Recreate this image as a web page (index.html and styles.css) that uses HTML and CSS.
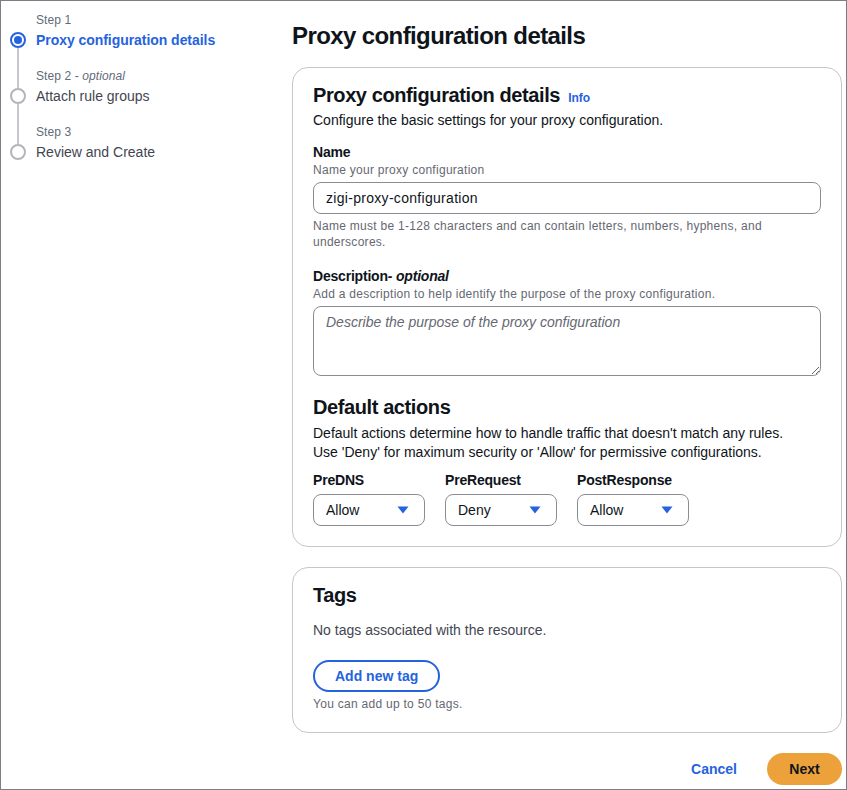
FILE: index.html
```html
<!DOCTYPE html>
<html lang="en">
<head>
<meta charset="utf-8">
<title>Proxy configuration details</title>
<link rel="stylesheet" href="styles.css">
</head>
<body>
<div class="frame">
  <nav class="steps">
    <div class="step-label row1">Step 1</div>
    <div class="marker active r2"><span class="dot"></span></div>
    <div class="step-title active-title r2">Proxy configuration details</div>
    <div class="line r34"></div>
    <div class="step-label r4">Step 2 - <em>optional</em></div>
    <div class="marker r5"></div>
    <div class="step-title r5">Attach rule groups</div>
    <div class="line r67"></div>
    <div class="step-label r7">Step 3</div>
    <div class="marker r8"></div>
    <div class="step-title r8">Review and Create</div>
  </nav>

  <main class="main">
    <h1 class="page-title">Proxy configuration details</h1>

    <section class="card">
      <h2 class="card-title">Proxy configuration details <a class="info" href="#">Info</a></h2>
      <p class="card-desc">Configure the basic settings for your proxy configuration.</p>

      <div class="field first-field">
        <div class="label">Name</div>
        <div class="hint">Name your proxy configuration</div>
        <input class="input" type="text" value="zigi-proxy-configuration">
        <div class="hint after">Name must be 1-128 characters and can contain letters, numbers, hyphens, and underscores.</div>
      </div>

      <div class="field">
        <div class="label">Description<em>- optional</em></div>
        <div class="hint">Add a description to help identify the purpose of the proxy configuration.</div>
        <textarea class="textarea" placeholder="Describe the purpose of the proxy configuration"></textarea>
      </div>

      <h2 class="card-title section-gap">Default actions</h2>
      <p class="card-desc actions-desc">Default actions determine how to handle traffic that doesn't match any rules.<br>Use 'Deny' for maximum security or 'Allow' for permissive configurations.</p>

      <div class="selects">
        <div class="sel-field">
          <div class="label">PreDNS</div>
          <div class="select"><span>Allow</span><svg class="caret" width="12" height="8" viewBox="0 0 12 8"><path d="M0.5 0.5h11L6 7.5z" fill="#2563de"/></svg></div>
        </div>
        <div class="sel-field">
          <div class="label">PreRequest</div>
          <div class="select"><span>Deny</span><svg class="caret" width="12" height="8" viewBox="0 0 12 8"><path d="M0.5 0.5h11L6 7.5z" fill="#2563de"/></svg></div>
        </div>
        <div class="sel-field">
          <div class="label">PostResponse</div>
          <div class="select"><span>Allow</span><svg class="caret" width="12" height="8" viewBox="0 0 12 8"><path d="M0.5 0.5h11L6 7.5z" fill="#2563de"/></svg></div>
        </div>
      </div>
    </section>

    <section class="card">
      <h2 class="card-title">Tags</h2>
      <p class="tags-empty">No tags associated with the resource.</p>
      <button class="btn-outline" type="button">Add new tag</button>
      <div class="hint after">You can add up to 50 tags.</div>
    </section>

    <div class="footer">
      <a class="cancel" href="#">Cancel</a>
      <button class="btn-primary" type="button">Next</button>
    </div>
  </main>
</div>
</body>
</html>
```

FILE: styles.css
```css
* { box-sizing: border-box; }
html, body { margin: 0; padding: 0; }
body {
  font-family: "Liberation Sans", Arial, sans-serif;
  color: #0f141a;
  background: #ffffff;
}
.frame {
  width: 847px;
  height: 790px;
  border: 1px solid #7d7d85;
  display: grid;
  grid-template-columns: 291px 550px;
  overflow: hidden;
}

/* Stepper */
.steps {
  display: grid;
  grid-template-columns: 16px 1fr;
  grid-template-rows: 18px 22px 16px 18px 22px 16px 18px 22px;
  column-gap: 10px;
  padding: 10px 0 0 9px;
  align-content: start;
}
.step-label {
  grid-column: 2;
  font-size: 12px;
  line-height: 18px;
  color: #5f6b7a;
  letter-spacing: 0.1px;
}
.step-label em { font-style: italic; }
.row1 { grid-row: 1; }
.r2 { grid-row: 2; }
.r34 { grid-row: 3 / 5; }
.r4 { grid-row: 4; }
.r5 { grid-row: 5; }
.r67 { grid-row: 6 / 8; }
.r7 { grid-row: 7; }
.r8 { grid-row: 8; }
.step-title {
  grid-column: 2;
  font-size: 14px;
  line-height: 22px;
  color: #424650;
}
.active-title { color: #2563de; font-weight: bold; letter-spacing: -0.05px; }
.marker {
  grid-column: 1;
  align-self: center;
  width: 16px;
  height: 16px;
  border-radius: 50%;
  border: 2px solid #b4b4bb;
  background: #fff;
  display: flex;
  align-items: center;
  justify-content: center;
}
.marker.active { border-color: #2563de; }
.dot {
  width: 8px;
  height: 8px;
  border-radius: 50%;
  background: #2563de;
}
.line {
  grid-column: 1;
  justify-self: center;
  width: 2px;
  background: #c6c6cd;
  margin: -3px 0;
}

/* Main */
.main {
  display: flex;
  flex-direction: column;
  padding-top: 20px;
}
.page-title {
  margin: 0 0 16px;
  font-size: 24px;
  line-height: 30px;
  font-weight: bold;
  letter-spacing: -0.6px;
}
.card {
  border: 1px solid #c6c6cd;
  border-radius: 16px;
  background: #fff;
  padding: 15px 20px 20px;
  margin-bottom: 20px;
}
.card-title {
  margin: 0;
  font-size: 20px;
  line-height: 24px;
  font-weight: bold;
  letter-spacing: -0.4px;
}
.info {
  font-size: 12px;
  font-weight: bold;
  color: #2563de;
  text-decoration: none;
  margin-left: 3px;
  letter-spacing: 0;
}
.card-desc {
  margin: 0;
  font-size: 14px;
  line-height: 20px;
  color: #0f141a;
}
.actions-desc {
  margin-top: 5px;
  line-height: 19px;
}
.field { margin-top: 16px; }
.first-field { margin-top: 12px; }
.label {
  font-size: 14px;
  line-height: 20px;
  font-weight: bold;
  letter-spacing: -0.2px;
}
.label em { font-style: italic; }
.hint {
  font-size: 12px;
  line-height: 16px;
  color: #656871;
  letter-spacing: 0.28px;
}
.hint.after { margin-top: 4px; }
.input {
  display: block;
  width: 100%;
  height: 32px;
  margin-top: 4px;
  border: 1px solid #8c8c94;
  border-radius: 8px;
  padding: 0 12px;
  font-family: inherit;
  font-size: 14px;
  letter-spacing: 0.3px;
  color: #0f141a;
  background: #fff;
  outline: none;
}
.textarea {
  display: block;
  width: 100%;
  height: 70px;
  margin-top: 4px;
  border: 1px solid #8c8c94;
  border-radius: 8px;
  padding: 5px 12px;
  font-family: inherit;
  font-size: 14px;
  line-height: 20px;
  resize: vertical;
  background: #fff;
  outline: none;
}
.textarea::placeholder { color: #656871; font-style: italic; opacity: 1; }
.section-gap { margin-top: 19px; }
.selects {
  display: flex;
  gap: 20px;
  margin-top: 8px;
}
.sel-field { width: 112px; }
.select {
  margin-top: 4px;
  height: 32px;
  border: 1px solid #8c8c94;
  border-radius: 8px;
  display: flex;
  align-items: center;
  justify-content: space-between;
  padding: 0 15px 0 12px;
  font-size: 14px;
  color: #0f141a;
}
.caret { display: block; }
.tags-empty {
  margin: 13px 0 0;
  font-size: 14px;
  line-height: 20px;
  color: #424650;
}
.btn-outline {
  margin-top: 20px;
  height: 32px;
  padding: 0 20px;
  border: 2px solid #2563de;
  border-radius: 20px;
  background: #fff;
  color: #2563de;
  font-family: inherit;
  font-size: 14px;
  font-weight: bold;
  display: block;
}
.footer {
  display: flex;
  justify-content: flex-end;
  align-items: center;
  gap: 30px;
}
.cancel {
  color: #2563de;
  font-size: 14px;
  font-weight: bold;
  text-decoration: none;
}
.btn-primary {
  height: 32px;
  width: 75px;
  border: none;
  border-radius: 20px;
  background: #eda13a;
  color: #0f141a;
  font-family: inherit;
  font-size: 14px;
  font-weight: bold;
}
```
